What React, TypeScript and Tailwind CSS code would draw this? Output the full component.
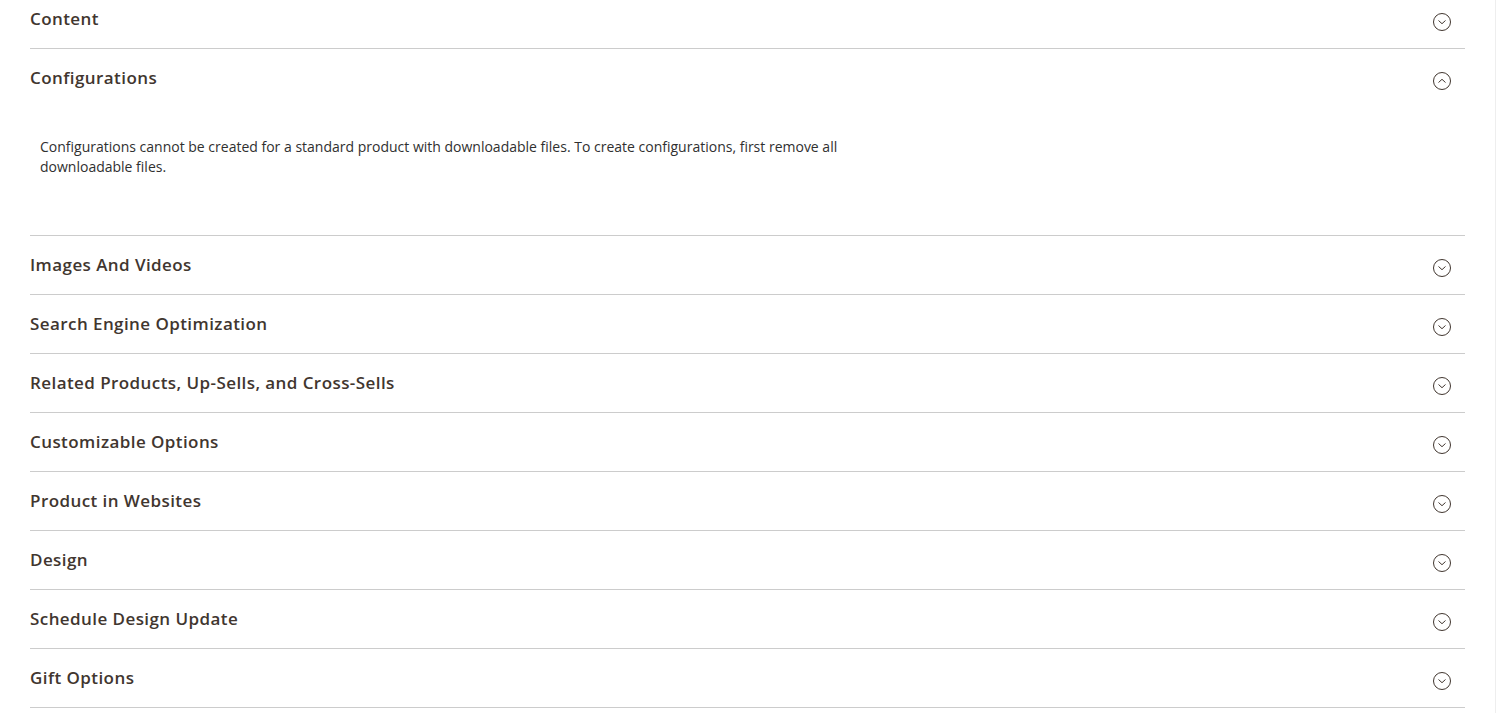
import React from 'react';

const sections = [
  'Images And Videos',
  'Search Engine Optimization',
  'Related Products, Up-Sells, and Cross-Sells',
  'Customizable Options',
  'Product in Websites',
  'Design',
  'Schedule Design Update',
  'Gift Options',
];

const Toggle: React.FC<{ open?: boolean }> = ({ open }) => (
  <svg width="20" height="20" viewBox="0 0 20 20" fill="none" className="mt-[6px]">
    <circle cx="10" cy="10" r="8.5" stroke="#41362f" strokeWidth="1" />
    {open ? (
      <path d="M6.5 11.5 L10 8.3 L13.5 11.5" stroke="#41362f" strokeWidth="1" />
    ) : (
      <path d="M6.5 8.5 L10 11.7 L13.5 8.5" stroke="#41362f" strokeWidth="1" />
    )}
  </svg>
);

const SectionHeader: React.FC<{ title: string; open?: boolean }> = ({ title, open }) => (
  <div className="flex h-[58px] items-center justify-between pr-[13px] cursor-pointer">
    <span className="text-[17px] font-semibold tracking-[0.025em] text-[#41362f]">{title}</span>
    <Toggle open={open} />
  </div>
);

const App: React.FC = () => {
  return (
    <div
      className="h-[713px] overflow-hidden border-r border-[#eeeeee] bg-white"
      style={{ fontFamily: '"Open Sans", "Liberation Sans", sans-serif' }}
    >
      <div className="-mt-[10px] ml-[30px] w-[1435px]">
        {/* Content */}
        <div className="border-b border-[#cccccc]">
          <SectionHeader title="Content" />
        </div>

        {/* Configurations (open) */}
        <div className="border-b border-[#cccccc]">
          <SectionHeader title="Configurations" open />
          <div className="h-[128px] pl-[10px] pt-[30px]">
            <p className="w-[830px] text-[14px] leading-[20px] text-[#303030]">
              Configurations cannot be created for a standard product with downloadable files. To create
              configurations, first remove all downloadable files.
            </p>
          </div>
        </div>

        {sections.map((s) => (
          <div key={s} className="border-b border-[#cccccc]">
            <SectionHeader title={s} />
          </div>
        ))}
      </div>
    </div>
  );
};

export default App;
